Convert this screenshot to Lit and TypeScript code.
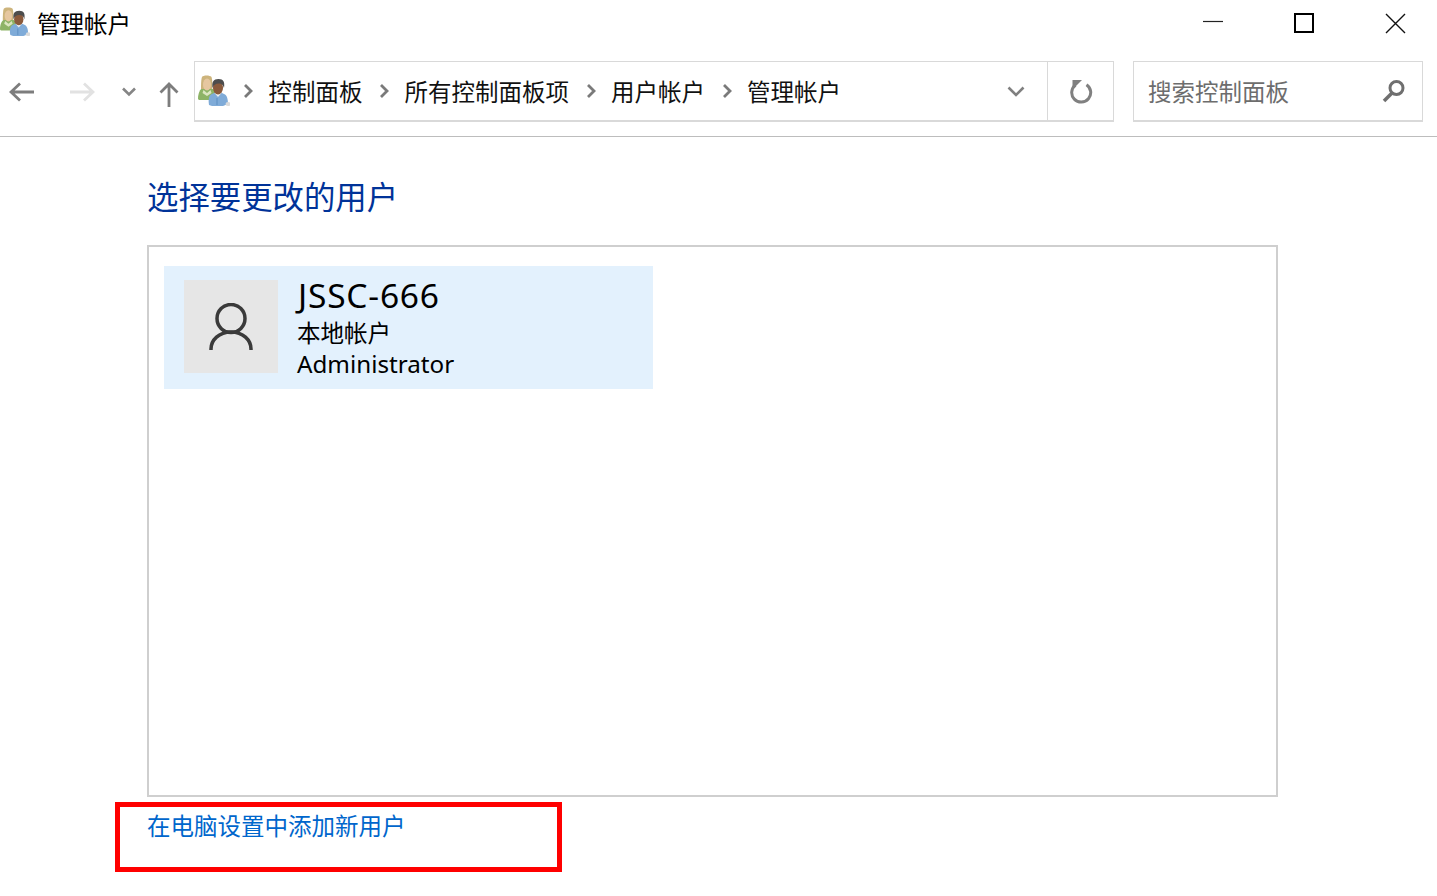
import { LitElement, html, css } from "lit";
import { customElement } from "lit/decorators.js";

const usersIcon = (size: number) => html`<svg width=${size} height=${size} viewBox="0 0 32 32">
  <path d="M0 25c0-6 2-10 5-11h8c3 1 5 4 5 9l-5 3H1z" fill="#8db366"/>
  <path d="M3 15c0-2 0-10 1-12C5 1 12 1 13.500 3c1 3 1 8 .5 12z" fill="#cdb47c"/>
  <ellipse cx="9" cy="10.500" rx="4" ry="6" fill="#e6c7a0"/>
  <path d="M5.500 16l3.500 3 3.500-3 1 3-4.500 3-4.500-3z" fill="#dbe5c0"/>
  <path d="M11 31c-1-6 0-10 3-11l4-2 4 0 4 2c3 1 4 5 4 10l-5 2H14z" fill="#7fabd8"/>
  <path d="M16.500 19l3.500 4 3.500-4-3.500-1z" fill="#f0f0f0"/>
  <path d="M19 24v7" stroke="#5f8fc2" stroke-width="1"/>
  <ellipse cx="30" cy="30" rx="2.500" ry="2" fill="#dadada"/>
  <ellipse cx="20" cy="14" rx="5" ry="6.500" fill="#8a5a3c"/>
  <path d="M14.500 14c-1-6 1-9 6-9s6.500 3 5.500 9c-1-3-2-4.500-5.500-4.500-3 0-5 1.500-6 4.500z" fill="#4d4d4d"/>
</svg>`;

@customElement("app-root")
export class AppRoot extends LitElement {
  static styles = css`
    :host {
      display: block;
      position: relative;
      width: 1437px;
      height: 896px;
      background: #fff;
      overflow: hidden;
      font-family: "Noto Sans CJK SC", "Noto Sans", sans-serif;
      color: #000;
    }
    .titlebar {
      height: 46px;
      display: flex;
      align-items: center;
      font-size: 23.5px;
    }
    .title-icon { display: flex; width: 37px; margin-top: -4px; }
    .title-text { flex: 1; line-height: 46px; }
    .winbtns { display: flex; padding-right: 31px; gap: 71px; align-items: center; }
    .winbtns svg { display: block; }
    .toolbar {
      height: 75px;
      border-bottom: 1px solid #bdbdbd;
      display: flex;
      align-items: flex-start;
      padding-top: 15px;
    }
    .nav { width: 194px; flex: none; height: 60px; display: flex; align-items: center; padding: 2px 0 0 9px; box-sizing: border-box; }
    .nav svg { display: block; flex: none; }
    .forward { margin-left: 34px; }
    .hist { margin-left: 26px; }
    .up { margin-left: 22px; margin-top: 4px; }
    .address {
      width: 920px;
      height: 61px;
      flex: none;
      box-sizing: border-box;
      border: 1px solid #d9d9d9;
      border-bottom-width: 2px;
      display: flex;
      align-items: center;
      font-size: 23.5px;
      color: #111;
    }
    .crumb-icon { display: flex; margin-left: 3px; margin-top: -3px; width: 45px; }
    .crumbs { flex: 1; display: flex; align-items: center; }
    .sep { display: block; margin-right: 15.500px; flex: none; }
    .crumb { margin-right: 16.500px; line-height: 58px; white-space: nowrap; margin-top: -1px; }
    .dropdown { width: 64px; display: flex; justify-content: center; padding-left: 2px; box-sizing: border-box; }
    .refresh { width: 66px; height: 100%; border-left: 1px solid #d9d9d9; display: flex; align-items: center; justify-content: center; box-sizing: border-box; padding: 2px 0 0 2px; }
    .search {
      width: 290px;
      height: 61px;
      margin-left: 19px;
      flex: none;
      box-sizing: border-box;
      border: 1px solid #d9d9d9;
      border-bottom-width: 2px;
      display: flex;
      align-items: center;
      padding: 0 16px 0 14px;
      font-size: 23.5px;
      color: #6d6d6d;
    }
    .search span { flex: 1; margin-top: -1px; }
    .main { padding-left: 147px; }
    h1 {
      margin: 0;
      padding-top: 35px;
      height: 73px;
      font-weight: 400;
      font-size: 31.400px;
      line-height: 48px;
      color: #003399;
    }
    .list {
      width: 1131px;
      height: 552px;
      box-sizing: border-box;
      border: 2px solid #cfcfcf;
      padding: 19px 0 0 15px;
    }
    .tile {
      width: 489px;
      height: 123px;
      background: #e3f1fd;
      display: flex;
      padding: 14px 0 0 20px;
      box-sizing: border-box;
    }
    .avatar {
      width: 94px;
      height: 93px;
      background: #e6e6e6;
      display: flex;
      align-items: center;
      justify-content: center;
      flex: none;
    }
    .info { margin-left: 19px; display: flex; flex-direction: column; margin-top: -4px; }
    .name { font-family: "Noto Sans", sans-serif; font-size: 33.500px; line-height: 38px; letter-spacing: 0.800px; margin-left: 1px; }
    .type { font-size: 23.5px; line-height: 34px; margin-top: 1px; }
    .role { font-family: "Noto Sans", sans-serif; font-size: 24.200px; line-height: 30px; }
    .link {
      display: block;
      margin-top: 11px;
      font-size: 23.5px;
      line-height: 34px;
      color: #0066cc;
      white-space: nowrap;
    }
    .annot {
      position: absolute;
      left: 115px;
      top: 802px;
      width: 447px;
      height: 70px;
      box-sizing: border-box;
      border: 5px solid #ff0000;
    }
  `;

  private chev() {
    return html`<svg class="sep" width="10" height="16" viewBox="0 0 10 16"><path d="M2 2l6 6-6 6" fill="none" stroke="#7a7a7a" stroke-width="2.800"/></svg>`;
  }

  render() {
    const crumbs = ["控制面板", "所有控制面板项", "用户帐户", "管理帐户"];
    return html`
      <div class="titlebar">
        <span class="title-icon">${usersIcon(30)}</span>
        <span class="title-text">管理帐户</span>
        <div class="winbtns">
          <svg width="20" height="20" viewBox="0 0 20 20"><path d="M0 8.500h20" stroke="#222" stroke-width="1.200"/></svg>
          <svg width="20" height="20" viewBox="0 0 20 20"><rect x="1" y="1" width="18" height="18" fill="none" stroke="#000" stroke-width="2"/></svg>
          <svg width="21" height="21" viewBox="0 0 21 21"><path d="M1 1l19 19M20 1L1 20" stroke="#111" stroke-width="1.400"/></svg>
        </div>
      </div>
      <div class="toolbar">
        <div class="nav">
          <svg width="26" height="20" viewBox="0 0 26 20"><path d="M25 10H2M11 1.500L2 10l9 8.500" fill="none" stroke="#7d7d7d" stroke-width="2.800"/></svg>
          <svg class="forward" width="26" height="20" viewBox="0 0 26 20"><path d="M1 10h23M15 1.500l9 8.500-9 8.500" fill="none" stroke="#e2e2e2" stroke-width="2.800"/></svg>
          <svg class="hist" width="16" height="10" viewBox="0 0 16 10"><path d="M2 1.500l6 6 6-6" fill="none" stroke="#858585" stroke-width="2.600"/></svg>
          <svg class="up" width="20" height="25" viewBox="0 0 20 25"><path d="M10 25V2M1.500 10.500L10 2l8.500 8.500" fill="none" stroke="#7d7d7d" stroke-width="2.800"/></svg>
        </div>
        <div class="address">
          <span class="crumb-icon">${usersIcon(32)}</span>
          <div class="crumbs">
            ${crumbs.map((c) => html`${this.chev()}<span class="crumb">${c}</span>`)}
          </div>
          <span class="dropdown"><svg width="18" height="11" viewBox="0 0 18 11"><path d="M1.500 1.500L9 9l7.500-7.500" fill="none" stroke="#808080" stroke-width="2.600"/></svg></span>
          <span class="refresh"><svg width="24" height="26" viewBox="0 0 24 26"><path d="M16.500 5.700A9.500 9.500 0 1 1 5.500 6" fill="none" stroke="#808080" stroke-width="3"/><path d="M2.500 10.500V1h9.500z" fill="#808080"/></svg></span>
        </div>
        <div class="search">
          <span>搜索控制面板</span>
          <svg width="24" height="24" viewBox="0 0 24 24"><circle cx="14.500" cy="9" r="6.500" fill="none" stroke="#6f6f6f" stroke-width="3"/><path d="M10 14l-8 8" stroke="#6f6f6f" stroke-width="3.600"/></svg>
        </div>
      </div>
      <div class="main">
        <h1>选择要更改的用户</h1>
        <div class="list">
          <div class="tile">
            <div class="avatar">
              <svg width="44" height="48" viewBox="0 0 44 48"><circle cx="22" cy="15.500" r="14" fill="none" stroke="#3a3a3a" stroke-width="3.500"/><path d="M2 47v-1c0-9 8-17 20-17s20 8 20 17v1" fill="none" stroke="#3a3a3a" stroke-width="3.500"/></svg>
            </div>
            <div class="info">
              <span class="name">JSSC-666</span>
              <span class="type">本地帐户</span>
              <span class="role">Administrator</span>
            </div>
          </div>
        </div>
        <a class="link">在电脑设置中添加新用户</a>
      </div>
      <div class="annot"></div>
    `;
  }
}
